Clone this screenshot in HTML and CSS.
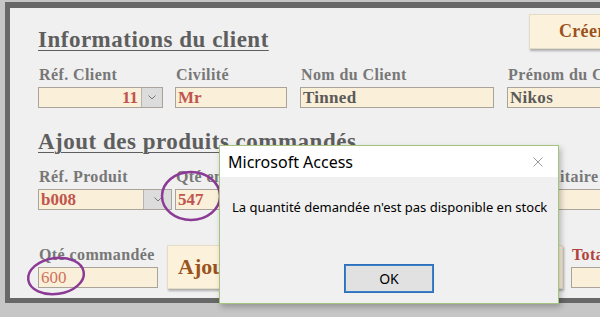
FILE: index.html
```html
<!DOCTYPE html>
<html lang="fr">
<head>
<meta charset="utf-8">
<title>Commande</title>
<link rel="stylesheet" href="styles.css">
</head>
<body>
<div class="frame">
  <div class="row-head">
    <h2 class="heading head-client">Informations du client</h2>
    <div class="btn btn-create">Créer</div>
  </div>

  <div class="row row1">
    <div class="field w-ref">
      <div class="label">Réf. Client</div>
      <div class="input combo red right"><span class="val">11</span><span class="drop"><svg width="8" height="5" viewBox="0 0 8 5"><polyline points="0.5,0.5 4,4 7.5,0.5" fill="none" stroke="#777" stroke-width="1"/></svg></span></div>
    </div>
    <div class="field w-civ">
      <div class="label">Civilité</div>
      <div class="input red"><span class="val">Mr</span></div>
    </div>
    <div class="field w-nom">
      <div class="label">Nom du Client</div>
      <div class="input dark"><span class="val">Tinned</span></div>
    </div>
    <div class="field w-pre">
      <div class="label">Prénom du Client</div>
      <div class="input dark"><span class="val">Nikos</span></div>
    </div>
  </div>

  <h2 class="heading head-prod">Ajout des produits commandés</h2>

  <div class="row row2">
    <div class="field w-refp">
      <div class="label">Réf. Produit</div>
      <div class="input combo red"><span class="val">b008</span><span class="drop"><svg width="8" height="5" viewBox="0 0 8 5"><polyline points="0.5,0.5 4,4 7.5,0.5" fill="none" stroke="#777" stroke-width="1"/></svg></span></div>
    </div>
    <div class="field w-stock">
      <div class="label">Qté en stock</div>
      <div class="input red"><span class="val">547</span></div>
    </div>
    <div class="field w-prix">
      <div class="label">Prix unitaire</div>
      <div class="input"><span class="val"></span></div>
    </div>
  </div>

  <div class="row row3">
    <div class="field w-qte">
      <div class="label">Qté commandée</div>
      <div class="input orange"><span class="val">600</span></div>
    </div>
    <div class="btn btn-add">Ajouter au panier</div>
    <div class="field w-total">
      <div class="label total">Total</div>
      <div class="input"><span class="val"></span></div>
    </div>
  </div>

  <svg class="marks" width="600" height="317" viewBox="0 0 600 317">
    <ellipse cx="181" cy="188" rx="29" ry="24" fill="none" stroke="#8b3a95" stroke-width="2.5"/>
    <ellipse cx="46" cy="268" rx="28" ry="18" fill="none" stroke="#8b3a95" stroke-width="2.5" transform="rotate(-8 46 268)"/>
  </svg>

  <div class="dialog">
    <div class="dlg-title">
      <span>Microsoft Access</span>
      <svg class="dlg-close" width="10" height="10" viewBox="0 0 10 10"><path d="M0.5 0.5 L9.5 9.5 M9.5 0.5 L0.5 9.5" stroke="#9a9a9a" stroke-width="1" fill="none"/></svg>
    </div>
    <div class="dlg-body">
      <p class="dlg-msg">La quantité demandée n'est pas disponible en stock</p>
      <div class="dlg-actions">
        <div class="dlg-ok">OK</div>
      </div>
    </div>
  </div>
</div>
</body>
</html>
```

FILE: styles.css
```css
html, body {
  margin: 0;
  padding: 0;
}
body {
  width: 600px;
  height: 317px;
  overflow: hidden;
  background: #c6c6c6;
}
.frame {
  position: relative;
  margin: 2px 0 0 5px;
  width: 720px;
  height: 290px;
  border-top: 6px solid #686868;
  border-left: 5px solid #686868;
  border-bottom: 5px solid #686868;
  background: #f0f0f0;
  padding-left: 28px;
  box-sizing: content-box;
  font-family: "Liberation Serif", "Times New Roman", serif;
}
.heading {
  margin: 0;
  font-size: 23px;
  letter-spacing: 0.5px;
  line-height: 26px;
  font-weight: bold;
  color: #5e5e5e;
  text-decoration: underline;
  text-decoration-thickness: 1px;
  text-underline-offset: 3px;
  white-space: nowrap;
}
.row-head {
  display: flex;
  align-items: flex-start;
}
.head-client {
  margin-top: 19px;
  width: 491px;
}
.btn {
  box-sizing: border-box;
  background: #fcf2dc;
  border: 1px solid #e4dcc6;
  box-shadow: 1px 2px 2px rgba(0, 0, 0, 0.28);
  color: #9a521f;
  font-weight: bold;
  white-space: nowrap;
}
.btn-create {
  margin-top: 6px;
  width: 110px;
  height: 35px;
  font-size: 18px;
  letter-spacing: 0.3px;
  line-height: 33px;
  padding-left: 29px;
}
.row {
  display: flex;
  align-items: flex-start;
}
.row1 {
  margin-top: 13px;
}
.field {
  display: flex;
  flex-direction: column;
  gap: 4px;
}
.label {
  font-size: 16px;
  letter-spacing: 0.4px;
  line-height: 17px;
  font-weight: bold;
  color: #777777;
  padding-left: 1px;
  white-space: nowrap;
}
.label.total {
  color: #b2423b;
}
.input {
  box-sizing: border-box;
  height: 21px;
  background: #faefd9;
  border: 1px solid #a9a39a;
  display: flex;
  align-items: center;
  font-size: 17px;
  line-height: 19px;
  font-weight: bold;
  padding-left: 2px;
  overflow: hidden;
}
.input .val {
  flex: 1;
  white-space: nowrap;
}
.input.right .val {
  text-align: right;
  padding-right: 3px;
}
.input.red { color: #c0554d; }
.input.orange { color: #d0735c; font-weight: normal; }
.input.dark { color: #5a5a5a; letter-spacing: 0.3px; }
.combo {
  padding-right: 0;
}
.drop {
  flex: none;
  width: 20px;
  height: 19px;
  background: #dcdcdc;
  border-left: 1px solid #b4b4b4;
  display: flex;
  align-items: center;
  justify-content: center;
}
.w-ref { width: 125px; }
.w-civ { width: 112px; margin-left: 12px; }
.w-nom { width: 194px; margin-left: 13px; }
.w-pre { width: 140px; margin-left: 13px; }
.head-prod { margin-top: 21px; }
.row2 { margin-top: 13px; }
.w-refp { width: 134px; }
.w-refp .drop { width: 27px; }
.w-stock { width: 110px; margin-left: 3px; }
.w-prix { width: 120px; margin-left: 220px; }
.row3 { margin-top: 35px; }
.w-qte { width: 120px; margin-top: 1px; }
.btn-add {
  margin-left: 9px;
  width: 396px;
  height: 44px;
  font-size: 22px;
  line-height: 42px;
  padding-left: 10px;
}
.w-total { width: 120px; margin-left: 8px; margin-top: 1px; }

.marks {
  position: absolute;
  left: 0;
  top: 0;
  pointer-events: none;
}

.dialog {
  position: absolute;
  left: 209px;
  top: 137px;
  width: 340px;
  height: 159px;
  box-sizing: border-box;
  border: 1px solid #a3c47a;
  background: #f0f0f0;
  box-shadow: 2px 3px 6px rgba(0, 0, 0, 0.25);
  font-family: "Noto Sans", "Open Sans", sans-serif;
  color: #000;
  display: flex;
  flex-direction: column;
}
.dlg-title {
  height: 31px;
  background: #fff;
  display: flex;
  align-items: center;
  justify-content: space-between;
  padding: 0 15px 0 8px;
  font-size: 16px;
}
.dlg-body {
  flex: 1;
  display: flex;
  flex-direction: column;
  padding: 0 12px;
}
.dlg-msg {
  margin: 21px 0 0 0;
  font-size: 13px;
  line-height: 18px;
  white-space: nowrap;
}
.dlg-actions {
  margin-top: auto;
  margin-bottom: 10px;
  display: flex;
  padding-left: 112px;
}
.dlg-ok {
  box-sizing: border-box;
  width: 90px;
  height: 29px;
  border: 1px solid #2b6fbd;
  box-shadow: inset 0 0 0 1px #3d80c8;
  background: #e1e1e1;
  font-size: 14px;
  line-height: 27px;
  text-align: center;
}
```
